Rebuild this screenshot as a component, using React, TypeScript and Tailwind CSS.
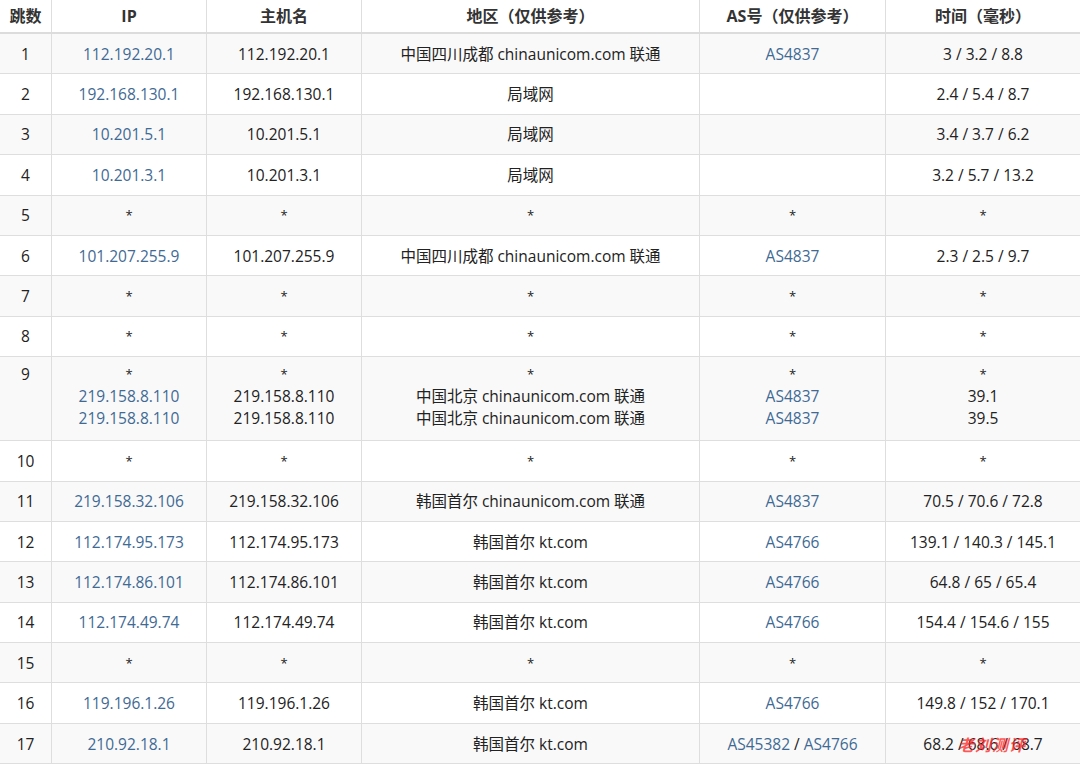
const link = "text-[#3f6a94]";

type Row = { n: string; ip: string[]; host: string[]; loc: string[]; as: string[]; t: string[] };

const s = (v: string) => [v];
const star = "*";
const rows: Row[] = [
  { n: "1", ip: s("112.192.20.1"), host: s("112.192.20.1"), loc: s("中国四川成都 chinaunicom.com 联通"), as: s("AS4837"), t: s("3 / 3.2 / 8.8") },
  { n: "2", ip: s("192.168.130.1"), host: s("192.168.130.1"), loc: s("局域网"), as: s(""), t: s("2.4 / 5.4 / 8.7") },
  { n: "3", ip: s("10.201.5.1"), host: s("10.201.5.1"), loc: s("局域网"), as: s(""), t: s("3.4 / 3.7 / 6.2") },
  { n: "4", ip: s("10.201.3.1"), host: s("10.201.3.1"), loc: s("局域网"), as: s(""), t: s("3.2 / 5.7 / 13.2") },
  { n: "5", ip: s(star), host: s(star), loc: s(star), as: s(star), t: s(star) },
  { n: "6", ip: s("101.207.255.9"), host: s("101.207.255.9"), loc: s("中国四川成都 chinaunicom.com 联通"), as: s("AS4837"), t: s("2.3 / 2.5 / 9.7") },
  { n: "7", ip: s(star), host: s(star), loc: s(star), as: s(star), t: s(star) },
  { n: "8", ip: s(star), host: s(star), loc: s(star), as: s(star), t: s(star) },
  {
    n: "9",
    ip: [star, "219.158.8.110", "219.158.8.110"],
    host: [star, "219.158.8.110", "219.158.8.110"],
    loc: [star, "中国北京 chinaunicom.com 联通", "中国北京 chinaunicom.com 联通"],
    as: [star, "AS4837", "AS4837"],
    t: [star, "39.1", "39.5"],
  },
  { n: "10", ip: s(star), host: s(star), loc: s(star), as: s(star), t: s(star) },
  { n: "11", ip: s("219.158.32.106"), host: s("219.158.32.106"), loc: s("韩国首尔 chinaunicom.com 联通"), as: s("AS4837"), t: s("70.5 / 70.6 / 72.8") },
  { n: "12", ip: s("112.174.95.173"), host: s("112.174.95.173"), loc: s("韩国首尔 kt.com"), as: s("AS4766"), t: s("139.1 / 140.3 / 145.1") },
  { n: "13", ip: s("112.174.86.101"), host: s("112.174.86.101"), loc: s("韩国首尔 kt.com"), as: s("AS4766"), t: s("64.8 / 65 / 65.4") },
  { n: "14", ip: s("112.174.49.74"), host: s("112.174.49.74"), loc: s("韩国首尔 kt.com"), as: s("AS4766"), t: s("154.4 / 154.6 / 155") },
  { n: "15", ip: s(star), host: s(star), loc: s(star), as: s(star), t: s(star) },
  { n: "16", ip: s("119.196.1.26"), host: s("119.196.1.26"), loc: s("韩国首尔 kt.com"), as: s("AS4766"), t: s("149.8 / 152 / 170.1") },
  { n: "17", ip: s("210.92.18.1"), host: s("210.92.18.1"), loc: s("韩国首尔 kt.com"), as: s("AS45382 / AS4766"), t: s("68.2 / 68.6 / 68.7") },
];

const cols = "grid grid-cols-[52px_155px_155px_338px_186px_194px]";

function Cell({ lines, blue, multi, last }: { lines: string[]; blue?: boolean; multi?: boolean; last?: boolean }) {
  return (
    <div className={`flex flex-col items-center ${multi ? "justify-start pt-[6px]" : "justify-center"} ${last ? "" : "border-r border-[#dedede]"}`}>
      {lines.map((l, i) => (
        <span key={i} className={`leading-[22px] ${blue && l !== star ? link : "text-[#222]"} ${l === star ? "text-[13px]" : ""}`}>
          {l.includes(" / AS") ? (
            <>
              <span className={link}>AS45382</span> <span className="text-[#222]">/</span> <span className={link}>AS4766</span>
            </>
          ) : (
            l
          )}
        </span>
      ))}
    </div>
  );
}

export default function App() {
  return (
    <div className="w-[1080px] h-[764px] overflow-hidden bg-white text-[15.5px] text-[#222]" style={{ fontFamily: '"Open Sans", "Noto Sans CJK SC", sans-serif' }}>
      <div className={`${cols} h-[34px] text-[16px] font-bold text-[#333] border-b-2 border-[#dcdcdc]`}>
        {["跳数", "IP", "主机名", "地区（仅供参考）", "AS号（仅供参考）", "时间（毫秒）"].map((h, i) => (
          <div key={h} className={`flex items-center justify-center ${i < 5 ? "border-r border-[#dedede]" : ""}`}>
            {h}
          </div>
        ))}
      </div>
      {rows.map((r, idx) => {
        const multi = r.ip.length > 1;
        return (
          <div
            key={r.n}
            className={`${cols} ${multi ? "h-[84px]" : "h-[40.4px]"} border-b border-[#dedede] ${idx % 2 === 0 ? "bg-[#f9f9f9]" : "bg-white"} relative`}
          >
            <Cell lines={[r.n]} multi={multi} />
            <Cell lines={r.ip} blue multi={multi} />
            <Cell lines={r.host} multi={multi} />
            <Cell lines={r.loc} multi={multi} />
            <Cell lines={r.as} blue multi={multi} />
            <Cell lines={r.t} multi={multi} last />
            {r.n === "17" && (
              <span className="absolute left-[958px] top-[9px] text-[16px] italic font-bold text-[#ff2a2a]/80 tracking-[1px]">
                老刘测评
              </span>
            )}
          </div>
        );
      })}
    </div>
  );
}
